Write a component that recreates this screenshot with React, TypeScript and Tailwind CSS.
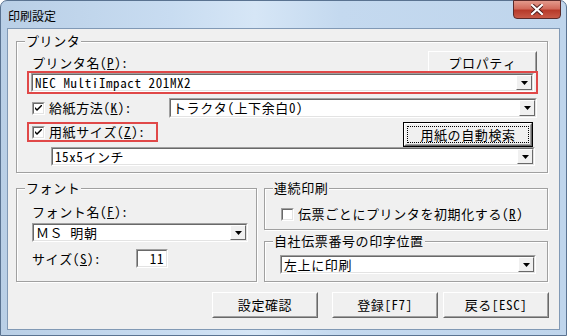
import React from "react";

function Arrow() {
  return (
    <div className="w-[16px] self-stretch flex items-center justify-center bg-[#f0f0f0] border border-t-white border-l-white border-b-[#696969] border-r-[#696969]">
      <svg width="7" height="4" viewBox="0 0 7 4">
        <polygon points="0,0 7,0 3.5,4" fill="#000" />
      </svg>
    </div>
  );
}

function Combo({ text, className }: { text: string; className: string }) {
  return (
    <div className={"border border-t-[#a0a0a0] border-l-[#a0a0a0] border-b-white border-r-white " + className}>
      <div className="h-full flex border border-t-[#696969] border-l-[#696969] border-b-[#e3e3e3] border-r-[#e3e3e3] bg-white">
        <div className="flex-1 pl-[2px] flex items-center whitespace-nowrap">{text}</div>
        <Arrow />
      </div>
    </div>
  );
}

function Check({ checked }: { checked: boolean }) {
  return (
    <div className="w-[13px] h-[13px] shrink-0 border border-t-[#a0a0a0] border-l-[#a0a0a0] border-b-white border-r-white">
      <div className="w-full h-full bg-white border border-t-[#696969] border-l-[#696969] border-b-[#e3e3e3] border-r-[#e3e3e3] flex items-center justify-center">
        {checked && (
          <svg width="7" height="7" viewBox="0 0 7 7">
            <path d="M0 2 L0 4 L2 6 L7 1 L7 -1 L2 4 Z" fill="#000" />
          </svg>
        )}
      </div>
    </div>
  );
}

function Btn({ children, className }: { children: React.ReactNode; className: string }) {
  return (
    <div className={"bg-[#f0f0f0] border border-t-white border-l-white border-b-[#696969] border-r-[#696969] " + className}>
      <div className="h-full flex items-center justify-center border border-t-transparent border-l-transparent border-b-[#a0a0a0] border-r-[#a0a0a0]">
        {children}
      </div>
    </div>
  );
}

function Group({ label, className, children }: { label: string; className: string; children?: React.ReactNode }) {
  return (
    <div className={"relative border border-[#a0a0a0] shadow-[1px_1px_0_#fff,inset_1px_1px_0_#fff] " + className}>
      <span className="absolute top-[-8px] left-[8px] px-[1px] bg-[#f0f0f0] leading-[14px]">{label}</span>
      {children}
    </div>
  );
}

export default function App() {
  return (
    <div className="w-[567px] h-[336px] flex flex-col rounded-t-[7px] border border-[#5a7391] bg-[linear-gradient(90deg,#b9cfe6_0%,#c8dcf1_30%,#d6e6f6_45%,#c4d9ef_60%,#bfd5ec_100%)] px-[6px] pb-[5px] text-black font-['Noto_Sans_Mono_CJK_JP','Noto_Sans_CJK_JP',sans-serif] text-[13px] tracking-[0.6px] leading-[14px]">
      <div className="h-[27px] flex items-start justify-between">
        <div className="mt-[8px] ml-[1px] text-[12px] tracking-normal font-['Noto_Sans_CJK_JP',sans-serif]">印刷設定</div>
        <div className="-mt-px mr-[-1px] w-[48px] h-[19px] rounded-b-[4px] border border-[#5a2a2a] bg-[linear-gradient(180deg,#e39a8c_0%,#d26b5c_45%,#b73a2a_55%,#c85a48_100%)] flex items-center justify-center">
          <svg width="12" height="11" viewBox="0 0 12 11">
            <path d="M1 1 L11 10 M11 1 L1 10" stroke="#4a1a1a" strokeWidth="4" strokeLinecap="square" />
            <path d="M1 1 L11 10 M11 1 L1 10" stroke="#fff" strokeWidth="2.2" strokeLinecap="square" />
          </svg>
        </div>
      </div>
      <div className="w-[553px] h-[302px] border border-[#8199b5] bg-[#f0f0f0] flex flex-col">
        {/* プリンタ */}
        <Group label="プリンタ" className="ml-[8px] mt-[12px] w-[532px] h-[132px] flex flex-col">
          <div className="mt-[9px] h-[23px] flex items-center pl-[15px] pr-[10px]">
            <span>プリンタ名(<u>P</u>):</span>
            <Btn className="ml-auto w-[109px] h-[23px]">プロパティ</Btn>
          </div>
          <div className="relative z-10 -mt-[3px] ml-[10px] w-[511px] h-[23px] border-2 border-[#e04848] bg-[#f0f0f0] pl-[2px]">
            <Combo text="NEC MultiImpact 201MX2" className="w-[503px] h-[19px]" />
          </div>
          <div className="mt-[4px] h-[20px] flex items-center pl-[15px] pr-[10px]">
            <Check checked />
            <span className="ml-[4px]">給紙方法(<u>K</u>):</span>
            <Combo text="トラクタ(上下余白0)" className="ml-auto w-[368px] h-[20px]" />
          </div>
          <div className="mt-[4px] h-[25px] flex items-start pl-[10px] pr-[14px]">
            <div className="h-[20px] w-[131px] border-2 border-[#e04848] flex items-center pl-[3px]">
              <Check checked />
              <span className="ml-[4px]">用紙サイズ(<u>Z</u>):</span>
            </div>
            <div className="ml-auto w-[130px] h-[25px] border border-black">
              <Btn className="w-full h-full">
                <div className="self-stretch flex-1 m-[1px] border border-dotted border-black flex items-center justify-center">用紙の自動検索</div>
              </Btn>
            </div>
          </div>
          <div className="pl-[34px]">
            <Combo text="15x5インチ" className="w-[484px] h-[19px]" />
          </div>
        </Group>

        <div className="mt-[15px] ml-[8px] flex gap-[7px]">
          <Group label="フォント" className="w-[241px] h-[94px] flex flex-col pl-[15px]">
            <div className="mt-[16px]">フォント名(<u>F</u>):</div>
            <Combo text="ＭＳ 明朝" className="mt-[4px] w-[216px] h-[19px]" />
            <div className="mt-[7px] h-[19px] flex items-center">
              <span>サイズ(<u>S</u>):</span>
              <div className="ml-auto mr-[88px] w-[32px] h-[19px] border border-t-[#a0a0a0] border-l-[#a0a0a0] border-b-white border-r-white">
                <div className="h-full bg-white border border-t-[#696969] border-l-[#696969] border-b-[#e3e3e3] border-r-[#e3e3e3] flex items-center justify-end pr-[2px]">11</div>
              </div>
            </div>
          </Group>
          <div className="flex flex-col">
            <Group label="連続印刷" className="w-[284px] h-[42px] flex items-start pl-[16px] pt-[18px]">
              <div className="flex items-center">
                <Check checked={false} />
                <span className="ml-[4px]">伝票ごとにプリンタを初期化する(<u>R</u>)</span>
              </div>
            </Group>
            <Group label="自社伝票番号の印字位置" className="mt-[11px] w-[284px] h-[41px] pl-[15px] pt-[13px]">
              <Combo text="左上に印刷" className="w-[256px] h-[19px]" />
            </Group>
          </div>
        </div>

        <div className="mt-[10px] ml-[204px] flex">
          <Btn className="w-[106px] h-[26px]">設定確認</Btn>
          <Btn className="ml-[14px] w-[106px] h-[26px]">登録[F7]</Btn>
          <Btn className="ml-[5px] w-[106px] h-[26px]">戻る[ESC]</Btn>
        </div>
      </div>
    </div>
  );
}
